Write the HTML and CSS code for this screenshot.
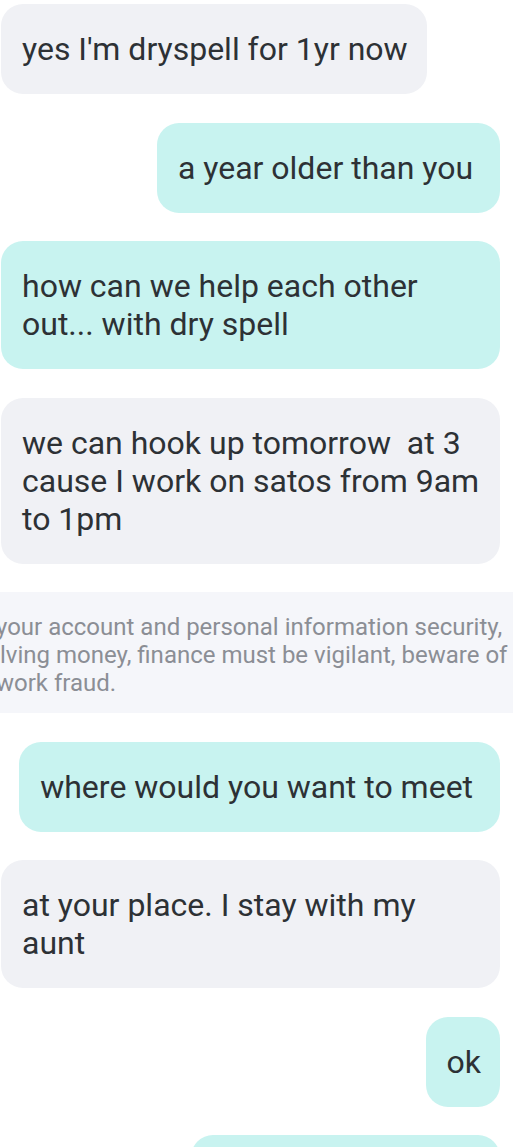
FILE: index.html
```html
<!DOCTYPE html>
<html lang="en">
<head>
<meta charset="utf-8">
<title>Chat</title>
<link rel="stylesheet" href="styles.css">
</head>
<body>
<main class="chat">
  <div class="msg in">yes I'm dryspell for 1yr now</div>
  <div class="msg out">a year older than you&nbsp;</div>
  <div class="msg out">how can we help each other out... with dry spell</div>
  <div class="msg in">we can hook up tomorrow &nbsp;at 3 cause I work on satos from 9am to 1pm</div>
  <div class="notice">
    <div class="line cut">your account and personal information security,</div>
    <div class="line">lving money, finance must be vigilant, beware of</div>
    <div class="line cut">work fraud.</div>
  </div>
  <div class="msg out">where would you want to meet&nbsp;</div>
  <div class="msg in">at your place. I stay with my aunt</div>
  <div class="msg out">ok</div>
  <div class="msg out last">&nbsp;</div>
</main>
</body>
</html>
```

FILE: styles.css
```css
html, body {
  margin: 0;
  padding: 0;
  background: #ffffff;
}

body {
  width: 513px;
  height: 1147px;
  overflow: hidden;
  font-family: Roboto, "Liberation Sans", sans-serif;
}

.chat {
  display: flex;
  flex-direction: column;
  gap: 28.5px;
  padding-top: 4px;
}

.msg {
  box-sizing: border-box;
  max-width: 499px;
  padding: 26px 19px 26px 21px;
  border-radius: 22px;
  font-size: 32px;
  line-height: 38px;
  color: #2d3135;
}

.msg.in {
  align-self: flex-start;
  margin-left: 1px;
  background: #f0f1f5;
}

.msg.out {
  align-self: flex-end;
  margin-right: 13px;
  background: #c8f3f0;
}

.msg.last {
  width: 309px;
}

.notice {
  background: #f5f6fa;
  padding: 21px 0 16px;
  font-size: 24px;
  line-height: 28px;
  color: #8b8e95;
  white-space: nowrap;
  overflow: hidden;
}

.notice .line.cut {
  margin-left: -4px;
}
```
